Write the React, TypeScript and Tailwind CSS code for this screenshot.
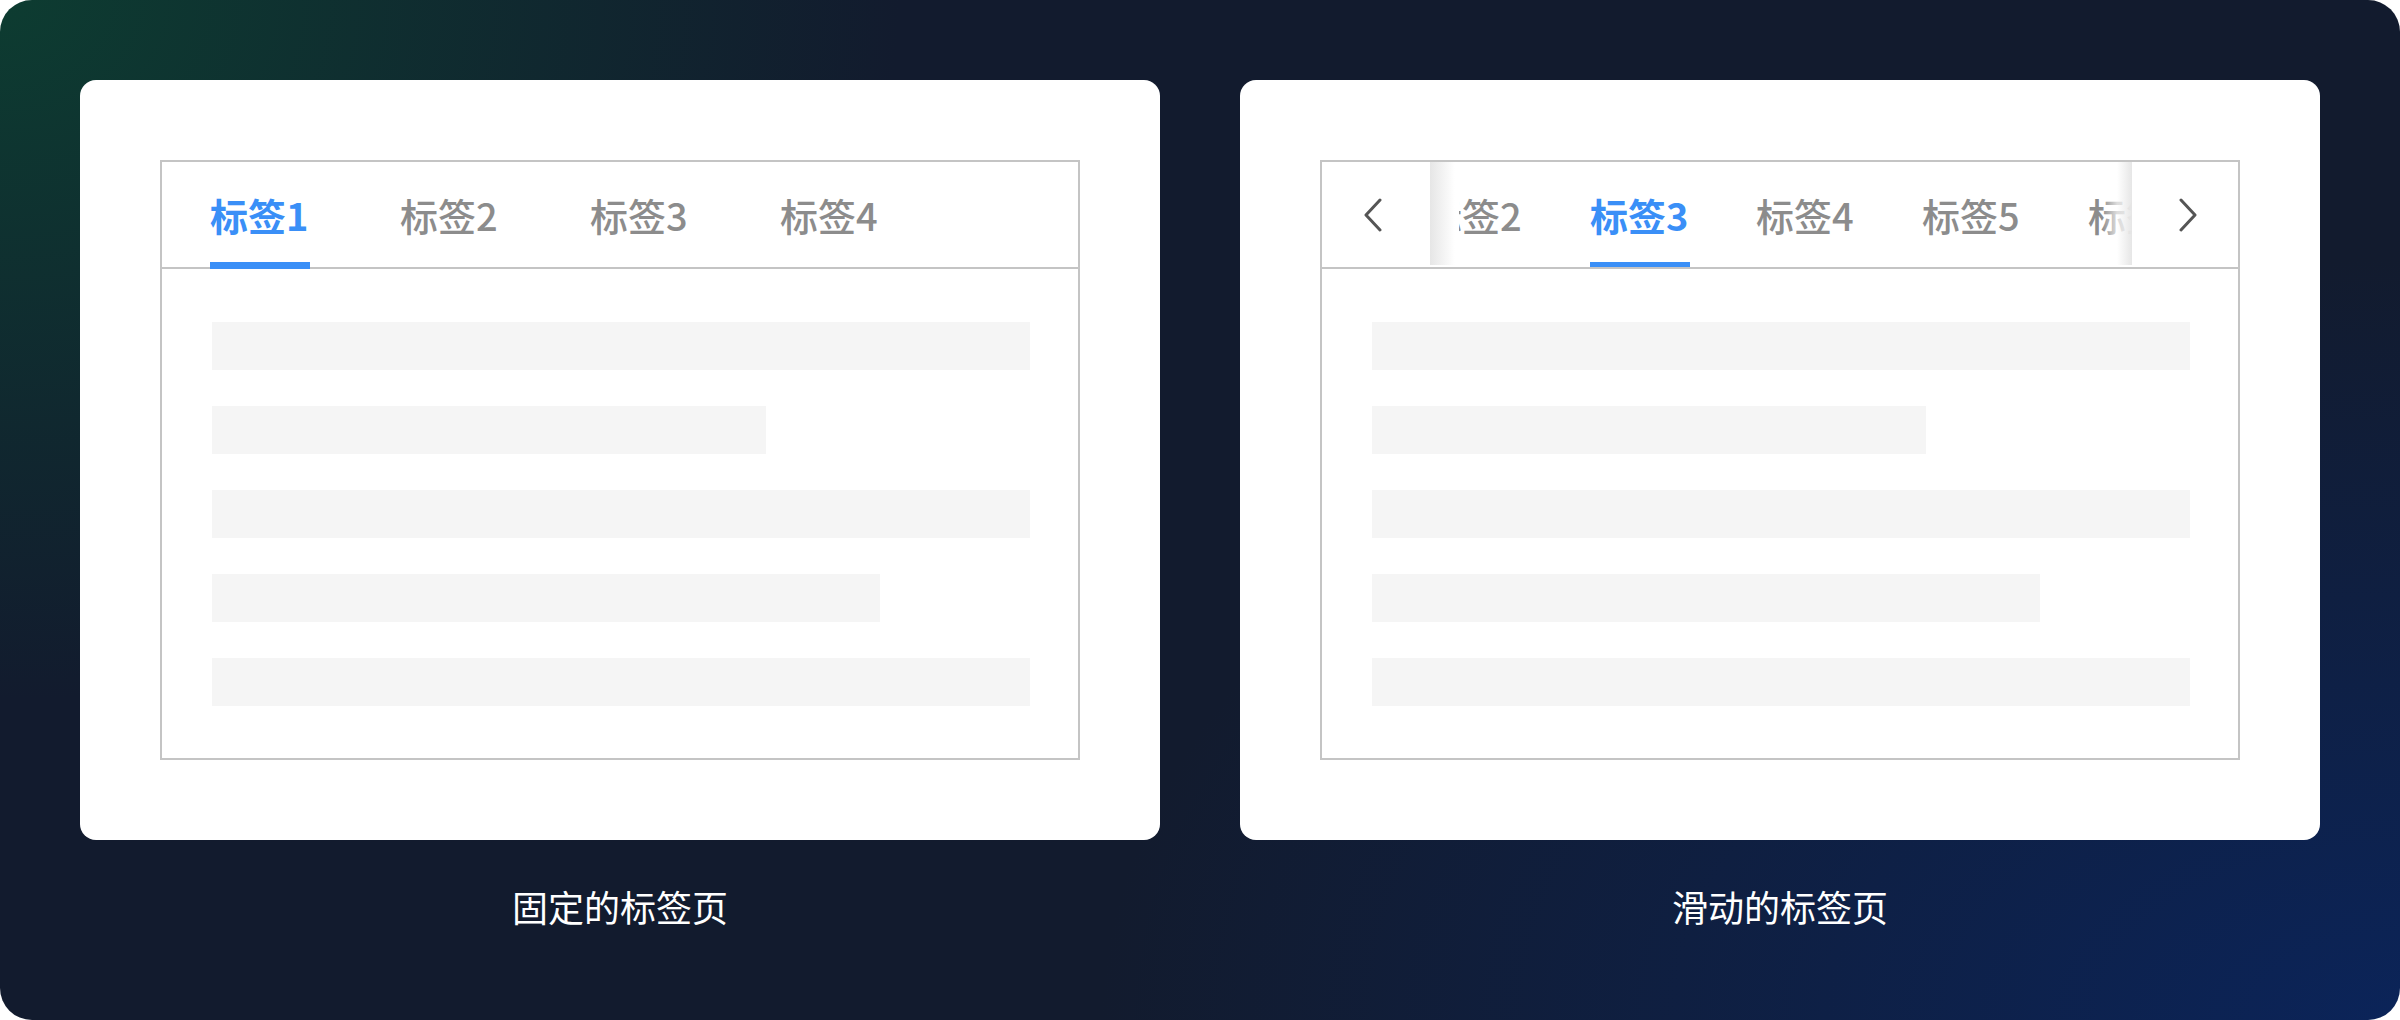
import React from 'react'

const bars = [818, 554, 818, 668, 818]

function ContentBars() {
  return (
    <div className="flex flex-col gap-[36px] pl-[50px] pr-[48px] pt-[53px] pb-[52px]">
      {bars.map((w, i) => (
        <div key={i} className="h-[48px] bg-[#f5f5f5]" style={{ width: w }} />
      ))}
    </div>
  )
}

function Tab({ label, active }: { label: string; active?: boolean }) {
  return (
    <div className="relative flex h-full w-[100px] shrink-0 items-center">
      <span
        className={
          active
            ? 'whitespace-nowrap text-[38px] leading-none font-semibold text-[#3a8ff7]'
            : 'whitespace-nowrap text-[38px] leading-none font-medium text-[#8c8c8c]'
        }
      >
        {label}
      </span>
      {active && <div className="absolute bottom-[-2px] left-0 h-[7px] w-[100px] bg-[#3a8ff7]" />}
    </div>
  )
}

function Chevron({ dir }: { dir: 'left' | 'right' }) {
  return (
    <svg width="20" height="34" viewBox="0 0 20 34" fill="none">
      <polyline
        points={dir === 'left' ? '17,2 3,17 17,32' : '3,2 17,17 3,32'}
        stroke="#555555"
        strokeWidth="3"
        strokeLinecap="round"
        strokeLinejoin="round"
      />
    </svg>
  )
}

function FixedTabs() {
  return (
    <div className="w-[920px] border-2 border-[#c4c4c4] bg-white">
      <div className="flex h-[107px] items-center gap-[90px] border-b-2 border-[#c4c4c4] pl-[48px]">
        <Tab label="标签1" active />
        <Tab label="标签2" />
        <Tab label="标签3" />
        <Tab label="标签4" />
      </div>
      <ContentBars />
    </div>
  )
}

function ScrollTabs() {
  const tabs = ['标签1', '标签2', '标签3', '标签4', '标签5', '标签6', '标签7']
  return (
    <div className="w-[920px] border-2 border-[#c4c4c4] bg-white">
      <div className="flex h-[107px] border-b-2 border-[#c4c4c4]">
        <button className="flex w-[108px] shrink-0 items-center justify-center pr-[6px]">
          <Chevron dir="left" />
        </button>
        <div className="relative h-full flex-1 overflow-hidden">
          <div className="ml-[-172px] flex h-full gap-[66px]">
            {tabs.map((t) => (
              <Tab key={t} label={t} active={t === '标签3'} />
            ))}
          </div>
          {/* edge shades: the left one hides the clipped glyph, the right one lets it fade */}
          <div className="absolute top-0 bottom-[2px] left-0 w-[29px] bg-gradient-to-r from-[#e6e6e6] via-white via-85% to-white" />
          <div className="absolute top-0 bottom-[2px] right-0 w-[30px] bg-gradient-to-l from-[#e6e6e6] via-white/70 to-white/0" />
        </div>
        <button className="flex w-[106px] shrink-0 items-center justify-center pl-[6px]">
          <Chevron dir="right" />
        </button>
      </div>
      <ContentBars />
    </div>
  )
}

function Panel({ caption, children }: { caption: string; children: React.ReactNode }) {
  return (
    <div className="flex w-[1080px] flex-col items-center">
      <div className="flex h-[760px] w-[1080px] items-center justify-center rounded-2xl bg-white">
        {children}
      </div>
      <div className="mt-[48px] text-[36px] leading-[36px] text-white">{caption}</div>
    </div>
  )
}

export default function App() {
  return (
    <div className="bg-white font-['Noto_Sans_CJK_SC',sans-serif]">
      <div className="flex h-[1020px] w-[2400px] gap-[80px] rounded-[32px] bg-[#121b2e] bg-[radial-gradient(ellipse_900px_700px_at_0%_0%,#0d3c31,rgba(18,27,46,0)),radial-gradient(ellipse_1300px_760px_at_100%_100%,#0b2459,rgba(18,27,46,0))] p-[80px]">
        <Panel caption="固定的标签页">
          <FixedTabs />
        </Panel>
        <Panel caption="滑动的标签页">
          <ScrollTabs />
        </Panel>
      </div>
    </div>
  )
}
